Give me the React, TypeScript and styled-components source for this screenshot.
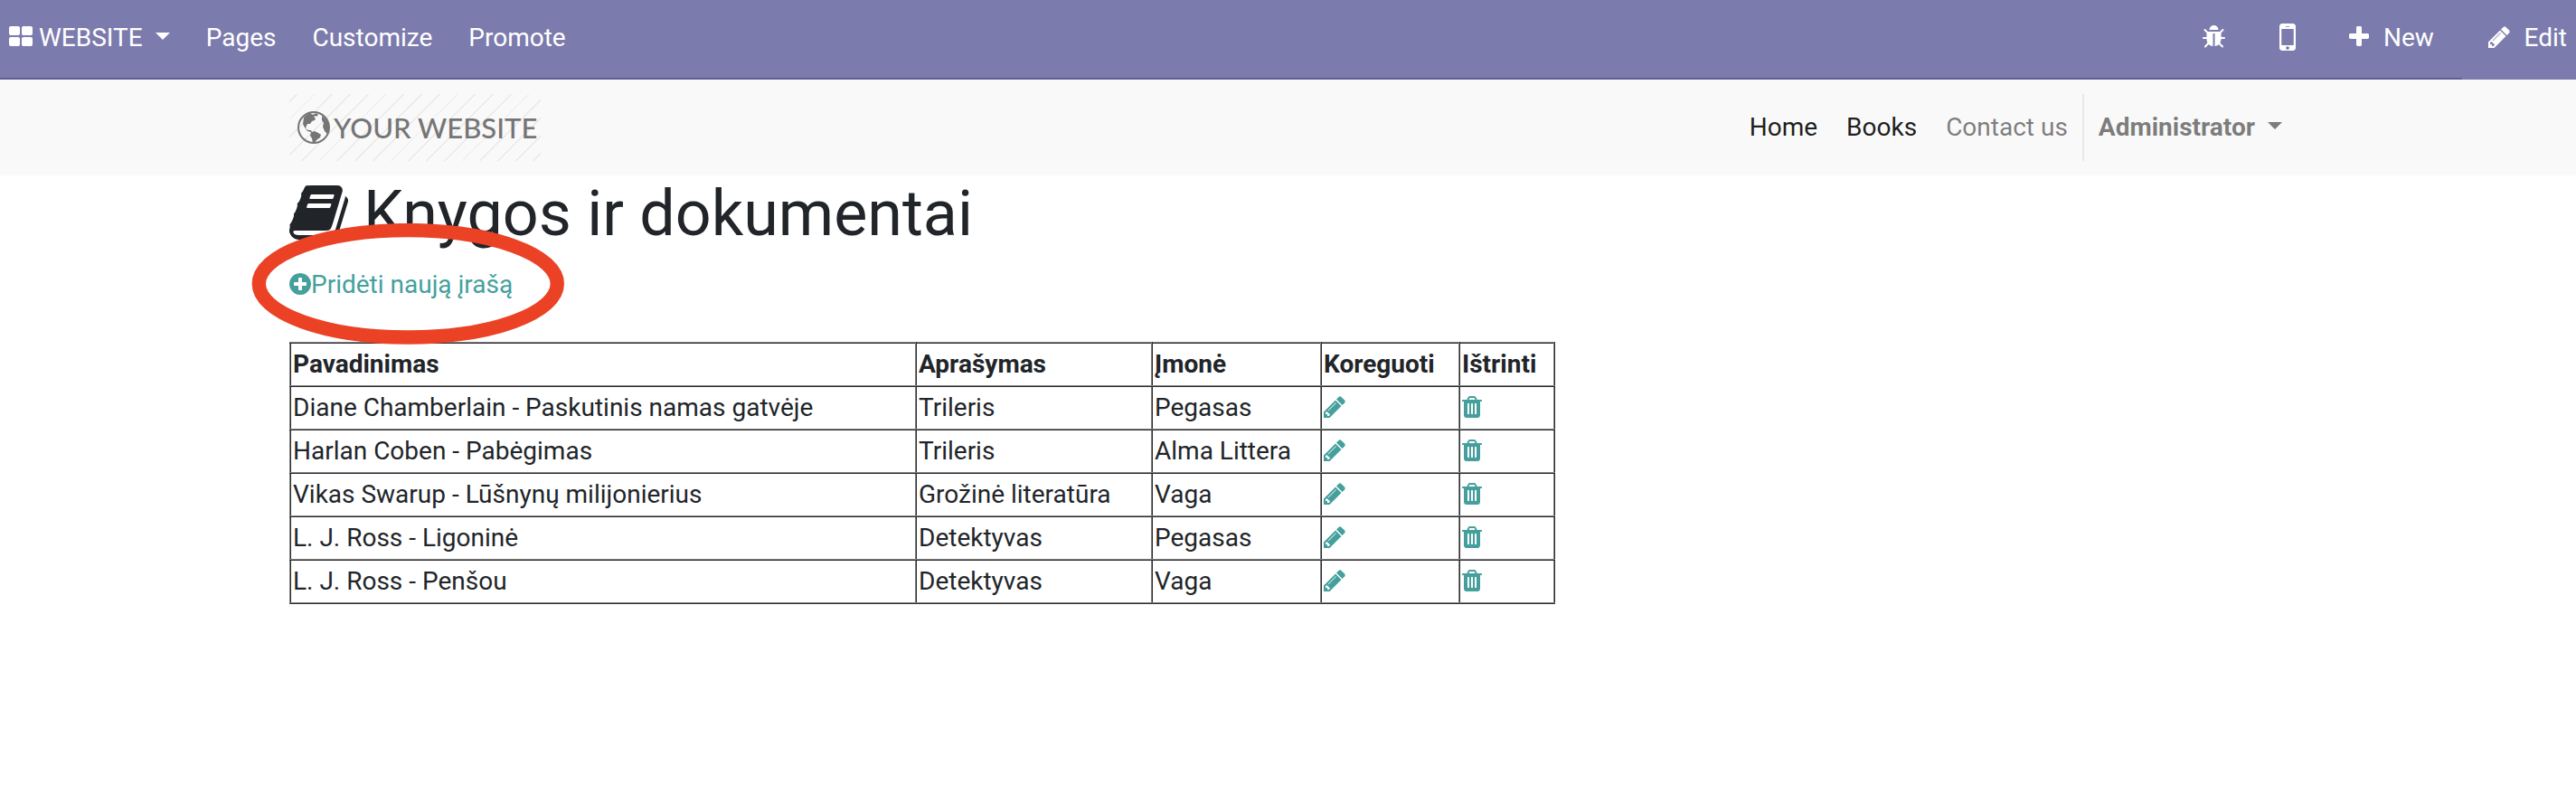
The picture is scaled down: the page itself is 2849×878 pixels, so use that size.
import React from "react";
import styled, { createGlobalStyle } from "styled-components";

const Global = createGlobalStyle`
  * { box-sizing: border-box; }
  body { margin: 0; background: #fff; color: #212529; font: 28px/42px Roboto, "Open Sans", sans-serif; }
  a { color: inherit; text-decoration: none; }
`;

const paths = {
  grid: "M832 1024v384q0 52-38 90t-90 38h-512q-52 0-90-38t-38-90v-384q0-52 38-90t90-38h512q52 0 90 38t38 90zm0-768v384q0 52-38 90t-90 38h-512q-52 0-90-38t-38-90v-384q0-52 38-90t90-38h512q52 0 90 38t38 90zm896 768v384q0 52-38 90t-90 38h-512q-52 0-90-38t-38-90v-384q0-52 38-90t90-38h512q52 0 90 38t38 90zm0-768v384q0 52-38 90t-90 38h-512q-52 0-90-38t-38-90v-384q0-52 38-90t90-38h512q52 0 90 38t38 90z",
  plus: "M1600 736v192q0 40-28 68t-68 28h-416v416q0 40-28 68t-68 28h-192q-40 0-68-28t-28-68v-416h-416q-40 0-68-28t-28-68v-192q0-40 28-68t68-28h416v-416q0-40 28-68t68-28h192q40 0 68 28t28 68v416h416q40 0 68 28t28 68z",
  pencil: "M491 1536l91-91-235-235-91 91v107h128v128h107zm523-928q0-22-22-22-10 0-17 7l-542 542q-7 7-7 17 0 22 22 22 10 0 17-7l542-542q7-7 7-17zm-54-192l416 416-832 832h-416v-416zm683 96q0 53-37 90l-166 166-416-416 166-165q36-38 90-38 53 0 91 38l235 234q37 39 37 91z",
  trash: "M704 1376v-704q0-14-9-23t-23-9h-64q-14 0-23 9t-9 23v704q0 14 9 23t23 9h64q14 0 23-9t9-23zm256 0v-704q0-14-9-23t-23-9h-64q-14 0-23 9t-9 23v704q0 14 9 23t23 9h64q14 0 23-9t9-23zm256 0v-704q0-14-9-23t-23-9h-64q-14 0-23 9t-9 23v704q0 14 9 23t23 9h64q14 0 23-9t9-23zm-544-992h448l-48-117q-7-9-17-11h-317q-10 2-17 11zm928 32v64q0 14-9 23t-23 9h-96v948q0 83-47 143.5t-113 60.5h-832q-66 0-113-58.5t-47-141.5v-952h-96q-14 0-23-9t-9-23v-64q0-14 9-23t23-9h309l70-167q15-37 54-63t79-26h320q40 0 79 26t54 63l70 167h309q14 0 23 9t9 23z",
  add: "M1344 960v-128q0-26-19-45t-45-19h-256v-256q0-26-19-45t-45-19h-128q-26 0-45 19t-19 45v256h-256q-26 0-45 19t-19 45v128q0 26 19 45t45 19h256v256q0 26 19 45t45 19h128q26 0 45-19t19-45v-256h256q26 0 45-19t19-45zm320-64q0 209-103 385.5t-279.5 279.5-385.5 103-385.5-103-279.5-279.5-103-385.5 103-385.5 279.5-279.5 385.5-103 385.5 103 279.5 279.5 103 385.5z",
  bug: "M1696 960q0 26-19 45t-45 19h-224q0 171-67 290l208 209q19 19 19 45t-19 45q-18 19-45 19t-45-19l-198-197q-5 5-15 13t-42 28.5-65 36.5-82 29-97 13v-896h-128v896q-51 0-101.5-13.5t-87-33-66-39-43.5-32.5l-15-14-183 207q-20 21-48 21-24 0-43-16-19-18-20.5-44.5t15.5-46.5l202-227q-58-114-58-274h-224q-26 0-45-19t-19-45 19-45 45-19h224v-294l-173-173q-19-19-19-45t19-45 45-19 45 19l173 173h844l173-173q19-19 45-19t45 19 19 45-19 45l-173 173v294h224q26 0 45 19t19 45zm-480-576h-640q0-133 93.5-226.5t226.5-93.5 226.5 93.5 93.5 226.5z",
  mobile: "M976 1408q0-33-23.5-56.5t-56.5-23.5-56.5 23.5-23.5 56.5 23.5 56.5 56.5 23.5 56.5-23.5 23.5-56.5zm208-160v-704q0-13-9.5-22.5t-22.5-9.5h-512q-13 0-22.5 9.5t-9.5 22.5v704q0 13 9.5 22.5t22.5 9.5h512q13 0 22.5-9.5t9.5-22.5zm-192-848q0-16-16-16h-160q-16 0-16 16t16 16h160q16 0 16-16zm288-16v1024q0 52-38 90t-90 38h-512q-52 0-90-38t-38-90v-1024q0-52 38-90t90-38h512q52 0 90 38t38 90z",
  book: "M1703 478q40 57 18 129l-275 906q-19 64-76.5 107.5t-122.5 43.5h-923q-77 0-148.5-53.5t-99.5-131.5q-24-67-2-127 0-4 3-27t4-37q1-8-3-21.5t-3-19.5q2-11 8-21t16.5-23.5 16.5-23.5q23-38 45-91.5t30-91.5q3-10 .5-30t-.5-28q3-11 17-28t17-23q21-36 42-92t25-90q1-9-2.5-32t.5-28q4-13 22-30.5t22-22.5q19-26 42.5-84.5t27.5-96.5q1-8-3-25.5t-2-26.5q2-8 9-18t18-23 17-21q8-12 16.5-30.5t15-35 16-36 19.5-32 26.5-23.5 36-11.5 47.5 5.5l-1 3q38-9 51-9h761q74 0 114 56t18 130l-274 906q-36 119-71.5 153.5t-128.5 34.5h-869q-27 0-38 15-11 16-1 43 24 70 144 70h923q29 0 56-15.5t35-41.5l300-987q7-22 5-57 38 15 59 43zm-1064 2q-4 13 2 22.5t20 9.5h608q13 0 25.5-9.5t16.5-22.5l21-64q4-13-2-22.5t-20-9.5h-608q-13 0-25.5 9.5t-16.5 22.5zm-83 256q-4 13 2 22.5t20 9.5h608q13 0 25.5-9.5t16.5-22.5l21-64q4-13-2-22.5t-20-9.5h-608q-13 0-25.5 9.5t-16.5 22.5z",
};

/* x/w: horizontal ink box inside the 1792-unit glyph grid */
const boxes: Record<keyof typeof paths, [number, number]> = {
  grid: [64, 1664], plus: [192, 1408], pencil: [128, 1515], trash: [192, 1408],
  add: [128, 1536], bug: [96, 1600], mobile: [512, 768], book: [64, 1664],
};

const Svg = styled.svg<{ $h: number }>`
  display: block;
  flex: none;
  height: ${(p) => p.$h}px;
  margin-bottom: 2px;
  fill: currentColor;
`;

function Icon({ name, size = 28 }: { name: keyof typeof paths; size?: number }) {
  const [x, w] = boxes[name];
  return (
    <Svg $h={size} width={(size * w) / 1792} viewBox={`${x} 0 ${w} 1792`}>
      <path d={paths[name]} />
    </Svg>
  );
}

const Page = styled.div`
  height: 878px;
  overflow: hidden;
`;

const TopBar = styled.header`
  display: flex;
  justify-content: space-between;
  height: 88px;
  padding: 0 10px 5px;
  color: #fff;
  background: linear-gradient(#5f5e97, #5f5e97) 0 100% / 2723px 2px no-repeat #7c7bad;
`;

const Menu = styled.nav`
  display: flex;
  align-items: center;
`;

const TopLink = styled.a<{ $left?: number; $gap?: number }>`
  display: flex;
  align-items: center;
  gap: ${(p) => p.$gap ?? 0}px;
  margin-left: ${(p) => p.$left ?? 0}px;
`;

const Caret = styled.i`
  margin: 0 0 4px 14px;
  border: 8px solid transparent;
  border-top-color: currentColor;
  border-bottom: 0;
`;

const SiteHeader = styled.div`
  display: flex;
  justify-content: space-between;
  height: 106px;
  padding: 16px 325px 16px 320px;
  background: #f9f9f9;
`;

const Logo = styled.a`
  display: flex;
  align-items: center;
  width: 278px;
  height: 74px;
  padding-left: 8px;
  gap: 3px;
  color: #757575;
  background: repeating-linear-gradient(135deg, transparent 0 5.2px, #e9e9e9 5.2px 6.5px, transparent 6.5px 13.96px);
  font: 500 31px/40px Lato, sans-serif;
  white-space: nowrap;
`;

const SiteNav = styled.nav`
  display: flex;
  align-items: center;
  color: rgba(0, 0, 0, 0.5);
`;

const NavItem = styled.a<{ $active?: boolean }>`
  margin-right: 32px;
  color: ${(p) => (p.$active ? "rgba(0,0,0,.9)" : "inherit")};
`;

const UserMenu = styled.a`
  display: flex;
  align-items: center;
  height: 74px;
  margin-left: -16px;
  padding-left: 16px;
  border-left: 2px solid #e9e9e9;
  font-weight: 700;
`;

const Main = styled.main`
  padding: 0 320px;
`;

const Title = styled.h1`
  display: flex;
  align-items: center;
  gap: 17px;
  height: 84px;
  margin: 0 0 16px;
  font: 400 70px/84px Roboto, sans-serif;
`;

const AddRow = styled.div`
  position: relative;
  width: max-content;
  height: 84px;
`;

const AddLink = styled.a`
  display: flex;
  align-items: center;
  height: 42px;
  color: #45a09d;
`;

const Ring = styled.svg`
  position: absolute;
  left: -42px;
  top: -47px;
  width: 348px;
  height: 136px;
  fill: none;
  stroke: #eb4226;
  stroke-width: 15.4;
`;

const Table = styled.table`
  width: 1399px;
  table-layout: fixed;
  border-collapse: collapse;
`;

const Cell = styled.td`
  height: 48px;
  padding: 2px;
  border: 2px inset gray;
  text-align: left;
  white-space: nowrap;
`;

const IconLink = styled.a`
  color: #45a09d;
`;

const GlobeSvg = styled.svg`
  flex: none;
  width: 38px;
  height: 38px;
  fill: currentColor;
`;

function Globe() {
  return (
    <GlobeSvg viewBox="0 0 38 38">
      <circle cx="19" cy="19" r="17" fill="none" stroke="currentColor" strokeWidth="2" />
      <path d="M8 8Q11 4 16 3L17 5L20 4L22 3L24 5L22 7L21 6L19 7L21 9L20 11L17 12L15 15L12 15L11 17L10 20L13 22L16 22L17 24L20 23L24 25L27 27L26 30L22 33L20 36H18L17 31L15 28L16 24L12 23L9 19L7 15ZM28 6Q35 11 36 18Q36 22 34 26L31 23L29 18L30 14L28 11Z" />
    </GlobeSvg>
  );
}

const rows = [
  ["Diane Chamberlain - Paskutinis namas gatvėje", "Trileris", "Pegasas"],
  ["Harlan Coben - Pabėgimas", "Trileris", "Alma Littera"],
  ["Vikas Swarup - Lūšnynų milijonierius", "Grožinė literatūra", "Vaga"],
  ["L. J. Ross - Ligoninė", "Detektyvas", "Pegasas"],
  ["L. J. Ross - Penšou", "Detektyvas", "Vaga"],
];
const heads = ["Pavadinimas", "Aprašymas", "Įmonė", "Koreguoti", "Ištrinti"];
const widths = [692, 261, 187, 153, 105];

export default function App() {
  return (
    <Page>
      <Global />
      <TopBar>
        <Menu>
          <TopLink $gap={7}><Icon name="grid" />WEBSITE</TopLink>
          <Caret />
          <TopLink $left={40}>Pages</TopLink>
          <TopLink $left={40}>Customize</TopLink>
          <TopLink $left={40}>Promote</TopLink>
        </Menu>
        <Menu>
          <TopLink><Icon name="bug" /></TopLink>
          <TopLink $left={60}><Icon name="mobile" size={42} /></TopLink>
          <TopLink $left={59} $gap={16}><Icon name="plus" />New</TopLink>
          <TopLink $left={60} $gap={16}><Icon name="pencil" />Edit</TopLink>
        </Menu>
      </TopBar>
      <SiteHeader>
        <Logo><Globe />YOUR WEBSITE</Logo>
        <SiteNav>
          <NavItem $active>Home</NavItem>
          <NavItem $active>Books</NavItem>
          <NavItem>Contact us</NavItem>
          <UserMenu>Administrator<Caret /></UserMenu>
        </SiteNav>
      </SiteHeader>
      <Main>
        <Title><Icon name="book" size={70} />Knygos ir dokumentai</Title>
        <AddRow>
          <AddLink><Icon name="add" />Pridėti naują įrašą</AddLink>
          <Ring viewBox="0 0 348 136"><ellipse cx="173.3" cy="66.8" rx="165" ry="59.2" /></Ring>
        </AddRow>
        <Table>
          <colgroup>{widths.map((w) => <col key={w} width={w} />)}</colgroup>
          <thead>
            <tr>{heads.map((h) => <Cell as="th" key={h}>{h}</Cell>)}</tr>
          </thead>
          <tbody>
            {rows.map((r) => (
              <tr key={r[0]}>
                {r.map((c, i) => <Cell key={i}>{c}</Cell>)}
                <Cell><IconLink><Icon name="pencil" /></IconLink></Cell>
                <Cell><IconLink><Icon name="trash" /></IconLink></Cell>
              </tr>
            ))}
          </tbody>
        </Table>
      </Main>
    </Page>
  );
}
